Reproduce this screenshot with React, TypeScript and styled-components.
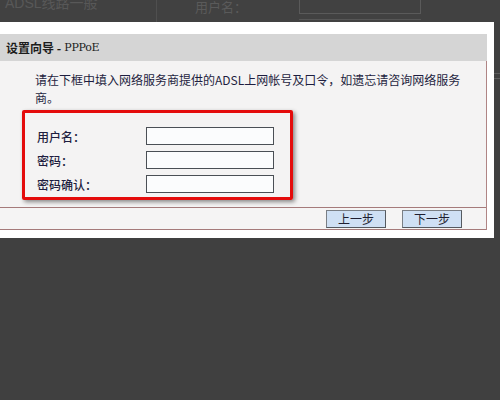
import React from "react";
import styled, { createGlobalStyle } from "styled-components";

const Global = createGlobalStyle`
  html, body { margin: 0; padding: 0; }
  body {
    background: #404040;
    width: 500px;
    height: 400px;
    overflow: hidden;
    font-family: "Noto Sans CJK SC", "Liberation Sans", sans-serif;
  }
`;

const Page = styled.div`
  display: flex;
  flex-direction: column;
  width: 500px;
  height: 400px;
  background: #404040;
`;

const TopStrip = styled.div`
  display: flex;
  height: 22px;
  overflow: hidden;
  background: #414141;
`;

const FadedCell = styled.div`
  width: 157px;
  border-right: 1px solid #4f4f4f;
  color: #585858;
  font-family: "Liberation Sans", "Noto Sans CJK SC", sans-serif;
  font-size: 14px;
  line-height: 14px;
  padding-left: 5px;
  box-sizing: border-box;
  margin-top: -4px;
  white-space: nowrap;
`;

const FadedLabel = styled.div`
  width: 142px;
  padding-left: 38px;
  box-sizing: border-box;
  color: #5a5a5a;
  font-size: 13px;
  line-height: 13px;
  margin-top: 0px;
  white-space: nowrap;
`;

const FadedBox = styled.div`
  width: 122px;
  display: flex;
  flex-direction: column;
`;

const FadedInput = styled.div`
  height: 13px;
  border: 1px solid #5a5a5a;
  border-top: none;
`;

const FadedLine = styled.div`
  margin-top: 5px;
  height: 1px;
  background: #565656;
`;

const PanelRow = styled.div`
  display: flex;
`;

const Panel = styled.div`
  width: 494px;
  background: #ffffff;
  padding: 12px 0 8px 0;
  box-sizing: border-box;
`;

const Gutter = styled.div`
  flex: 1;
  display: flex;
  flex-direction: column;
  padding-top: 51px;
  gap: 4px;
`;

const GutterLine = styled.div`
  height: 1px;
  background: #5e5e5e;
`;

const Header = styled.div`
  width: 487px;
  height: 27px;
  background: #d5d5d5;
  display: flex;
  align-items: center;
  padding-left: 6px;
  box-sizing: border-box;
  font-size: 12px;
  color: #1c1c1c;
  font-weight: 700;
  white-space: nowrap;
`;

const Mono = styled.span`
  font-family: "DejaVu Serif", "Liberation Serif", serif;
  font-size: 11px;
  font-weight: 400;
  letter-spacing: -0.3px;
`;

const Frame = styled.div`
  width: 487px;
  border-right: 1px solid #b08585;
  box-sizing: border-box;
`;

const Body = styled.div`
  height: 146px;
  background: #f4f3f3;
  padding-top: 10px;
  box-sizing: border-box;
`;

const Intro = styled.p`
  margin: 0;
  padding-left: 35px;
  font-size: 12px;
  line-height: 18px;
  color: #1e1e40;
  white-space: nowrap;
`;

const RedBox = styled.div`
  margin: 3px 0 0 22px;
  width: 271px;
  height: 90px;
  border: 3px solid #e40b0b;
  border-radius: 2px;
  box-shadow: 2px 2px 4px rgba(0, 0, 0, 0.45);
  box-sizing: border-box;
  padding: 14px 16px 4px 12px;
  display: flex;
  flex-direction: column;
  gap: 6px;
`;

const Row = styled.div`
  display: flex;
  align-items: center;
  height: 18px;
`;

const Label = styled.span`
  width: 109px;
  font-size: 12px;
  font-weight: 500;
  color: #1e1e40;
  white-space: nowrap;
`;

const Field = styled.input`
  width: 128px;
  height: 18px;
  box-sizing: border-box;
  border: 1px solid #4a4f55;
  background: #fbfcfd;
  padding: 0;
  margin: 0;
  outline: none;
`;

const Footer = styled.div`
  height: 23px;
  border-top: 1px solid #a57a7a;
  border-bottom: 1px solid #a57a7a;
  box-sizing: border-box;
  background: #f5f4f4;
  display: flex;
  justify-content: flex-end;
  align-items: flex-start;
  padding: 2px 24px 0 0;
  gap: 16px;
`;

const Button = styled.button`
  width: 60px;
  height: 18px;
  padding: 0;
  margin: 0;
  box-sizing: border-box;
  background: #cfe0f4;
  border: 1px solid #555a60;
  border-top-color: #7a7f85;
  border-left-color: #7a7f85;
  font-family: "Noto Sans CJK SC", sans-serif;
  font-size: 12px;
  line-height: 16px;
  color: #1e1e30;
`;

export default function App() {
  return (
    <>
      <Global />
      <Page>
        <TopStrip>
          <FadedCell>ADSL线路一般</FadedCell>
          <FadedLabel>用户名：</FadedLabel>
          <FadedBox>
            <FadedInput />
            <FadedLine />
          </FadedBox>
        </TopStrip>
        <PanelRow>
          <Panel>
            <Header>
              设置向导 - <Mono>&nbsp;PPPoE</Mono>
            </Header>
            <Frame>
              <Body>
                <Intro>
                  请在下框中填入网络服务商提供的ADSL上网帐号及口令，如遗忘请咨询网络服务
                  <br />
                  商。
                </Intro>
                <RedBox>
                  <Row>
                    <Label>用户名：</Label>
                    <Field type="text" />
                  </Row>
                  <Row>
                    <Label>密码：</Label>
                    <Field type="password" />
                  </Row>
                  <Row>
                    <Label>密码确认：</Label>
                    <Field type="password" />
                  </Row>
                </RedBox>
              </Body>
              <Footer>
                <Button>上一步</Button>
                <Button>下一步</Button>
              </Footer>
            </Frame>
          </Panel>
          <Gutter>
            <GutterLine />
            <GutterLine />
          </Gutter>
        </PanelRow>
      </Page>
    </>
  );
}
